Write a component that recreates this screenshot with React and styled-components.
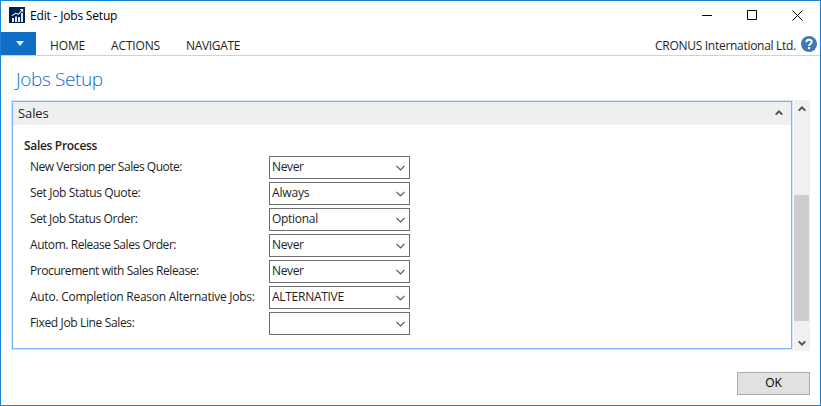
import React from 'react';
import styled, { createGlobalStyle } from 'styled-components';

const GlobalStyle = createGlobalStyle`
  *, *::before, *::after { box-sizing: border-box; }
  body { margin: 0; background: #fff; overflow: hidden; }
  svg { display: block; flex: none; }
`;

const Window = styled.div`
  display: flex;
  flex-direction: column;
  width: 821px;
  height: 406px;
  border: 1px solid #1883d7;
  background: #fff;
  color: #1e1e1e;
  font: 12px/16px "Open Sans", "Noto Sans", sans-serif;
  white-space: nowrap;
`;

const Text = styled.span`
  letter-spacing: ${({ $track }) => $track || 0}px;
`;

const TitleBar = styled.header`
  display: flex;
  align-items: flex-start;
  height: 31px;
  padding: 6px 0 0 8px;
  color: #000;
`;

const WindowTitle = styled.h1`
  flex: 1;
  margin: 1px 0 0 5px;
  font-size: 12px;
  font-weight: 400;
  line-height: 16px;
`;

const WindowControls = styled.div`
  display: flex;
  gap: 35px;
  padding: 3px 17px 0 0;
`;

const Ribbon = styled.nav`
  display: flex;
  align-items: center;
  height: 24px;
  padding-right: 3px;
  border-bottom: 1px solid #d2d2d2;
  color: #1e1e1e;
`;

const FileMenu = styled.button`
  display: flex;
  align-items: center;
  justify-content: center;
  width: 35px;
  height: 23px;
  padding: 0 0 0 2px;
  border: 0;
  background: #106ec6;
`;

const Tabs = styled.div`
  display: flex;
  flex: 1;
  gap: 26px;
  padding: 5px 0 0 14px;
`;

const Company = styled.div`
  padding: 5px 5px 0 0;
`;

const HelpIcon = styled.div`
  padding-top: 1px;
`;

const PageTitle = styled.h2`
  margin: 10px 0 0 15px;
  color: #106ec6;
  font-size: 19px;
  font-weight: 300;
  line-height: 26px;
`;

const Content = styled.main`
  display: flex;
  height: 251px;
  margin: 8px 10px 0 10px;
`;

const FastTab = styled.section`
  width: 780px;
  height: 248px;
  margin: 1px 2px 0 1px;
  border: 1px solid #7fb0f8;
  box-shadow: 0 0 0 1px #d3e3fb;
`;

const FastTabHeader = styled.div`
  display: flex;
  align-items: center;
  justify-content: space-between;
  height: 23px;
  padding: 0 8px 2px 5px;
  background: #efefef;
  font-size: 13px;
`;

const Fields = styled.div`
  padding: 13px 0 0 11px;
`;

const GroupTitle = styled.h3`
  margin: 0 0 2px;
  font-size: 12px;
  font-weight: 600;
  line-height: 16px;
`;

const FieldRow = styled.div`
  display: grid;
  grid-template-columns: 239px 141px;
  align-items: center;
  height: 23px;
  margin-bottom: 3px;
  padding-left: 6px;
`;

const FieldLabel = styled(Text)`
  padding-bottom: 1px;
`;

const ComboBox = styled.div`
  display: flex;
  align-items: center;
  justify-content: space-between;
  height: 23px;
  padding: 1px 4px 0 2px;
  border: 1px solid #707070;
  background: #fff;
`;

const ComboValue = styled(Text)`
  padding-bottom: 2px;
`;

const ScrollBar = styled.div`
  display: flex;
  flex-direction: column;
  align-items: center;
  width: 16px;
  height: 251px;
  margin-left: auto;
  padding: 6px 0 5px;
  background: #f0f0f0;
`;

const Thumb = styled.div`
  width: 15px;
  height: 126px;
  margin: 83px 1px auto 0;
  background: #cdcdcd;
`;

const Footer = styled.footer`
  display: flex;
  justify-content: flex-end;
  padding: 21px 10px 0;
`;

const Button = styled.button`
  width: 73px;
  height: 23px;
  padding: 0 0 1px;
  border: 1px solid #adadad;
  background: #e1e1e1;
  color: #000;
  font: inherit;
`;

const AppLogo = () => (
  <svg width="16" height="16" viewBox="0 0 16 16">
    <rect width="16" height="16" fill="#002050" />
    <path d="M4 11v4M7 9.5V15M10 10V15M13 6v9" stroke="#fff" strokeWidth="1.8" fill="none" />
    <path d="M2.8 8.8 6.5 6.3l2.8 1 4.2-4.6" stroke="#dfe5ee" strokeWidth="1.1" fill="none" />
    <path d="M10.8 2h3.4v3.4z" fill="#fff" />
  </svg>
);

const Chevron = ({ up, bold }) => bold ? (
  <svg width="8" height="6" viewBox="0 0 8 6">
    <path d={up ? 'M.7 4.6 4 1.4l3.3 3.2' : 'M.7 1.4 4 4.6l3.3-3.2'} fill="none" stroke="#505050" strokeWidth="2" />
  </svg>
) : (
  <svg width="9" height="6" viewBox="0 0 9 6">
    <path d="M.5.9 4.5 4.9 8.5.9" fill="none" stroke="#555" strokeWidth="1.2" />
  </svg>
);

const tabs = [['HOME', -0.15], ['ACTIONS', -0.15], ['NAVIGATE', -0.35]];

const fields = [
  ['New Version per Sales Quote:', -0.48, 'Never', -0.35],
  ['Set Job Status Quote:', -0.35, 'Always', -0.15],
  ['Set Job Status Order:', -0.41, 'Optional', -0.3],
  ['Autom. Release Sales Order:', -0.45, 'Never', -0.35],
  ['Procurement with Sales Release:', -0.42, 'Never', -0.35],
  ['Auto. Completion Reason Alternative Jobs:', -0.26, 'ALTERNATIVE', -0.28],
  ['Fixed Job Line Sales:', -0.36, '', 0],
];

export default function App() {
  return (
    <>
      <GlobalStyle />
      <Window>
        <TitleBar>
          <AppLogo />
          <WindowTitle><Text $track={-0.18}>Edit - Jobs Setup</Text></WindowTitle>
          <WindowControls>
            <svg width="10" height="10"><path d="M0 5.5h10" stroke="#000" /></svg>
            <svg width="10" height="10"><path d="M.5.5h9v9h-9z" fill="none" stroke="#000" /></svg>
            <svg width="11" height="11"><path d="m.5.5 10 10m0-10-10 10" stroke="#000" /></svg>
          </WindowControls>
        </TitleBar>
        <Ribbon>
          <FileMenu>
            <svg width="8" height="5"><path d="M0 0h8L4 5z" fill="#e8f2fb" /></svg>
          </FileMenu>
          <Tabs>
            {tabs.map(([name, track]) => <Text key={name} $track={track}>{name}</Text>)}
          </Tabs>
          <Company><Text $track={-0.29}>CRONUS International Ltd.</Text></Company>
          <HelpIcon>
            <svg width="16" height="16" viewBox="0 0 16 16">
              <circle cx="8" cy="8" r="8" fill="#4478b0" />
              <path d="M5.2 6.2C5.3 2.8 10.9 3 10.7 6c-.1 1.7-2.6 1.7-2.6 3.9" fill="none" stroke="#fff" strokeWidth="1.9" />
              <path d="M7 11.1h2.1v2H7z" fill="#fff" />
            </svg>
          </HelpIcon>
        </Ribbon>
        <PageTitle><Text $track={-0.38}>Jobs Setup</Text></PageTitle>
        <Content>
          <FastTab>
            <FastTabHeader>
              <Text $track={-0.1}>Sales</Text>
              <Chevron up bold />
            </FastTabHeader>
            <Fields>
              <GroupTitle><Text $track={-0.32}>Sales Process</Text></GroupTitle>
              {fields.map(([label, labelTrack, value, valueTrack]) => (
                <FieldRow key={label}>
                  <FieldLabel $track={labelTrack}>{label}</FieldLabel>
                  <ComboBox>
                    <ComboValue $track={valueTrack}>{value}</ComboValue>
                    <Chevron />
                  </ComboBox>
                </FieldRow>
              ))}
            </Fields>
          </FastTab>
          <ScrollBar>
            <Chevron up bold />
            <Thumb />
            <Chevron bold />
          </ScrollBar>
        </Content>
        <Footer><Button>OK</Button></Footer>
      </Window>
    </>
  );
}
